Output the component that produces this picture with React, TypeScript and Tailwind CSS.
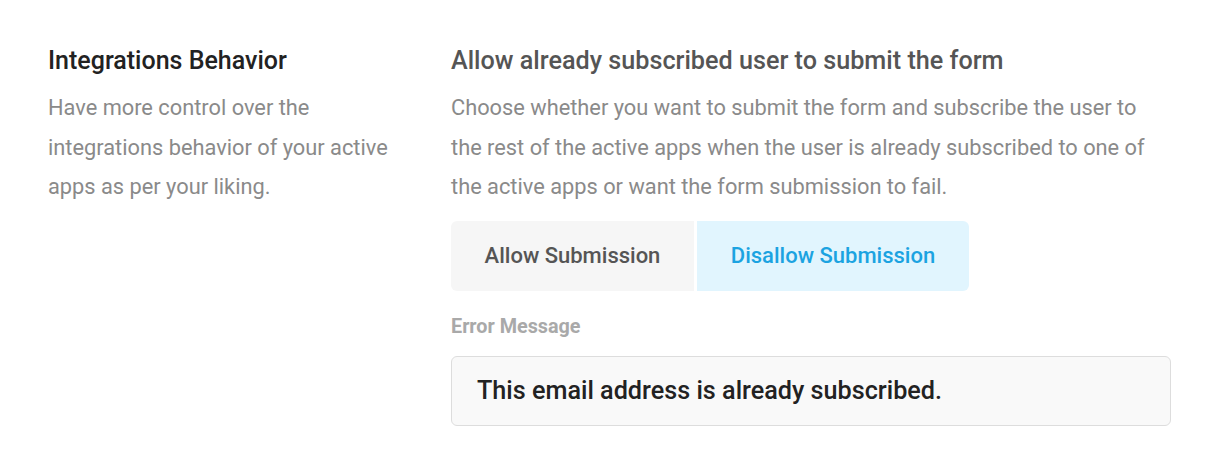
export default function App() {
  return (
    <div className="w-[1220px] h-[468px] bg-white flex pl-[48px] pt-[44px]" style={{ fontFamily: "Roboto, sans-serif" }}>
      <div className="w-[403px] shrink-0">
        <h2 className="text-[25px] leading-[34px] font-medium text-[#222222]">Integrations Behavior</h2>
        <p className="mt-[10px] text-[21.8px] leading-[39.5px] text-[#8a8a8a] w-[350px]">
          Have more control over the integrations behavior of your active apps as per your liking.
        </p>
      </div>
      <div className="w-[720px]">
        <h2 className="text-[25.2px] leading-[34px] font-medium text-[#555555]">Allow already subscribed user to submit the form</h2>
        <p className="mt-[10px] text-[21.8px] leading-[39.5px] text-[#8a8a8a] w-[705px]">
          Choose whether you want to submit the form and subscribe the user to the rest of the active apps when the user is already subscribed to one of the active apps or want the form submission to fail.
        </p>
        <div className="mt-[14px] flex gap-[3px]">
          <button className="h-[70px] w-[243px] rounded-l-[6px] bg-[#f6f6f6] text-[22px] font-medium text-[#555555]">Allow Submission</button>
          <button className="h-[70px] w-[272px] rounded-r-[6px] bg-[#e1f5fe] text-[22px] font-medium text-[#1ba3e1]">Disallow Submission</button>
        </div>
        <div className="mt-[24px] text-[19.8px] leading-[24px] font-bold text-[#a9a9a9]">Error Message</div>
        <div className="mt-[17px] h-[70px] w-[720px] rounded-[6px] border border-[#dddddd] bg-[#f9f9f9] flex items-center px-[25px] text-[25.2px] font-medium text-[#222222]">
          This email address is already subscribed.
        </div>
      </div>
    </div>
  );
}
